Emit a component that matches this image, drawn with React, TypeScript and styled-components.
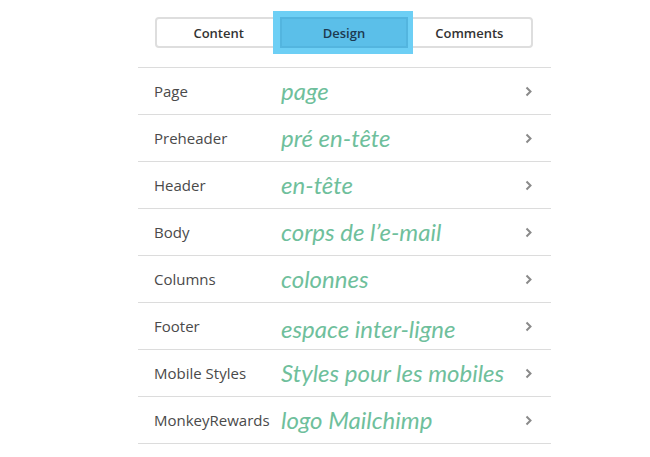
import styled, { createGlobalStyle } from 'styled-components'

const GlobalStyle = createGlobalStyle`
  html, body {
    margin: 0;
    background: #fff;
  }
  body {
    font-family: 'Open Sans', 'Liberation Sans', sans-serif;
  }
`

type Item = {
  label: string
  note: string
  shift?: number
}

const items: Item[] = [
  { label: 'Page', note: 'page' },
  { label: 'Preheader', note: 'pré en-tête' },
  { label: 'Header', note: 'en-tête' },
  { label: 'Body', note: 'corps de l’e-mail' },
  { label: 'Columns', note: 'colonnes' },
  { label: 'Footer', note: 'espace inter-ligne', shift: 6 },
  { label: 'Mobile Styles', note: 'Styles pour les mobiles' },
  { label: 'MonkeyRewards', note: 'logo Mailchimp' },
]

const Panel = styled.div`
  width: 413px;
  margin-left: 138px;
  padding-top: 17px;
`

const TabGroup = styled.div`
  display: flex;
  width: 374px;
  height: 27px;
  margin: 0 0 19px 17px;
  border: 2px solid #dedede;
  border-radius: 4px;
`

const Tab = styled.div<{ $active?: boolean }>`
  flex: 1;
  display: flex;
  align-items: center;
  justify-content: center;
  font-size: 13px;
  font-weight: 600;
  color: #333;
  ${(p) =>
    p.$active &&
    `
    position: relative;
    z-index: 1;
    margin: -2px 0;
    background: #5bbfe9;
    border: 2px solid #53b5df;
    color: #1d3a50;
    box-shadow: -1px 0 0 6px #6dcff5;
  `}
`

const List = styled.div`
  border-top: 1px solid #dcdcdc;
`

const Row = styled.div`
  display: flex;
  align-items: center;
  height: 46px;
  padding: 0 19px 0 16px;
  border-bottom: 1px solid #dcdcdc;
`

const Label = styled.div`
  width: 127px;
  flex-shrink: 0;
  font-size: 15px;
  color: #4a4a4a;
  margin-top: -1px;
`

const Note = styled.div<{ $shift?: number }>`
  flex: 1;
  font-family: Lato, 'Liberation Sans', sans-serif;
  font-style: italic;
  font-size: 24px;
  line-height: 1;
  color: #6fbf9c;
  padding-top: ${(p) => p.$shift || 0}px;
  white-space: nowrap;
`

const Chevron = () => (
  <svg width="7" height="11" viewBox="0 0 7 11">
    <polyline points="1.5,1.5 5.5,5.5 1.5,9.5" fill="none" stroke="#8a8a8a" strokeWidth="2" />
  </svg>
)

export default function App() {
  return (
    <>
      <GlobalStyle />
      <Panel>
        <TabGroup>
          <Tab>Content</Tab>
          <Tab $active>Design</Tab>
          <Tab>Comments</Tab>
        </TabGroup>
        <List>
          {items.map((item) => (
            <Row key={item.label}>
              <Label>{item.label}</Label>
              <Note $shift={item.shift}>{item.note}</Note>
              <Chevron />
            </Row>
          ))}
        </List>
      </Panel>
    </>
  )
}
